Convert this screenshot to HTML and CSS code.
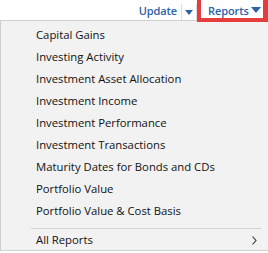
FILE: index.html
```html
<!DOCTYPE html>
<html>
<head>
<meta charset="utf-8">
<link rel="stylesheet" href="styles.css">
</head>
<body>
<div class="topbar">
  <div class="btn-group">
    <span class="btn-label">Update</span>
    <span class="btn-split"><svg width="8" height="5" viewBox="0 0 8 5"><path d="M0 0h8L4 5z" fill="#2b62a8"/></svg></span>
  </div>
  <div class="btn-reports">
    <span class="btn-label">Reports</span>
    <svg width="10" height="6" viewBox="0 0 10 6"><path d="M0 0h10L5 6z" fill="#2b62a8"/></svg>
  </div>
</div>
<div class="menu">
  <div class="item">Capital Gains</div>
  <div class="item">Investing Activity</div>
  <div class="item">Investment Asset Allocation</div>
  <div class="item">Investment Income</div>
  <div class="item">Investment Performance</div>
  <div class="item">Investment Transactions</div>
  <div class="item">Maturity Dates for Bonds and CDs</div>
  <div class="item">Portfolio Value</div>
  <div class="item">Portfolio Value &amp; Cost Basis</div>
  <div class="sep"></div>
  <div class="item last">All Reports
    <svg class="chev" width="5" height="9" viewBox="0 0 5 9"><path d="M0.5 0.5L4 4.5L0.5 8.5" fill="none" stroke="#333" stroke-width="1.1"/></svg>
  </div>
</div>
</body>
</html>
```

FILE: styles.css
```css
html, body {
  margin: 0;
  padding: 0;
  background: #fff;
}
body {
  width: 268px;
  height: 253px;
  overflow: hidden;
  font-family: "Open Sans", "Noto Sans", sans-serif;
}
.topbar {
  position: relative;
  z-index: 2;
  height: 20px;
  display: flex;
  justify-content: flex-end;
  align-items: stretch;
  background: #fff;
  padding-right: 5px;
}
.btn-group {
  display: flex;
  align-items: center;
}
.btn-label {
  color: #2b62a8;
  font-weight: 600;
  font-size: 11px;
  letter-spacing: -0.1px;
}
.btn-split {
  box-sizing: border-box;
  display: flex;
  align-items: center;
  justify-content: center;
  margin-left: 4px;
  width: 16px;
  height: 16px;
  margin-top: 4px;
  align-self: flex-start;
  border-left: 1px solid #d8dde4;
  border-right: 1px solid #d8dde4;
}
.btn-reports {
  box-sizing: border-box;
  position: relative;
  display: flex;
  align-items: center;
  gap: 2px;
  margin-left: 4px;
  padding-left: 7px;
  width: 62px;
}
.btn-reports::after {
  content: "";
  position: absolute;
  left: -4px;
  right: -5px;
  top: -6px;
  bottom: -2px;
  border: 4px solid #e63c3c;
  border-right-width: 5px;
}
.menu {
  background: #f2f2f2;
  border: 1px solid #cfcfcf;
  border-right: none;
  padding-top: 3px;
  font-size: 11.3px;
  color: #111;
}
.item {
  height: 22px;
  line-height: 22px;
  padding-left: 35px;
  position: relative;
}
.sep {
  height: 8px;
  position: relative;
}
.sep::after {
  content: "";
  position: absolute;
  left: 30px;
  width: 230px;
  top: 6px;
  height: 1px;
  background: #d4d4d4;
}
.item.last {
  height: 20px;
  line-height: 20px;
}
.chev {
  position: absolute;
  left: 251px;
  top: 6px;
}
```
